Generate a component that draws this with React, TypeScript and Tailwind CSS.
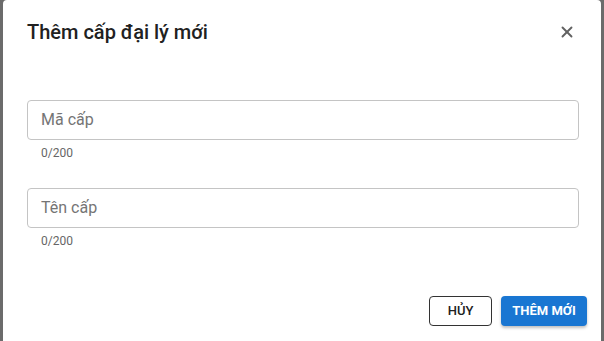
import { X } from "lucide-react";

function TextField({ placeholder }: { placeholder: string }) {
  return (
    <div className="flex flex-col">
      <div className="h-[40px] rounded-[4px] border border-[#c4c4c4] flex items-center px-[13px]">
        <input
          placeholder={placeholder}
          className="w-full bg-transparent outline-none text-[16px] text-[#212121] placeholder:text-[#757575]"
        />
      </div>
      <div className="mt-[5px] pl-[14px] text-[12px] leading-[16px] text-[#666666]">0/200</div>
    </div>
  );
}

export default function App() {
  return (
    <div
      className="w-[604px] h-[341px] bg-[#6b6b6b] flex justify-center overflow-hidden"
      style={{ fontFamily: "Roboto, 'Noto Sans', sans-serif" }}
    >
      <div className="w-[598px] h-[360px] bg-white rounded-[4px] flex flex-col">
        <div className="flex items-center justify-between pt-[16px] pl-6 pr-[25px]">
          <h2 className="text-[20px] leading-[32px] font-medium text-[#212121]">Thêm cấp đại lý mới</h2>
          <button className="text-[#616161]">
            <X size={18} strokeWidth={2.5} />
          </button>
        </div>

        <div className="flex flex-col gap-[27px] pt-[52px] pl-6 pr-[22px]">
          <TextField placeholder="Mã cấp" />
          <TextField placeholder="Tên cấp" />
        </div>

        <div className="flex justify-end gap-[9px] pt-[47px] pr-[14px]">
          <button className="h-[30px] w-[63px] rounded-[4px] border border-[#333333] text-[13px] font-medium text-[#212121]">
            HỦY
          </button>
          <button className="h-[30px] w-[86px] rounded-[4px] bg-[#1976d2] text-[13px] font-bold text-white shadow-[0_2px_3px_rgba(0,0,0,0.25)]">
            THÊM MỚI
          </button>
        </div>
      </div>
    </div>
  );
}
